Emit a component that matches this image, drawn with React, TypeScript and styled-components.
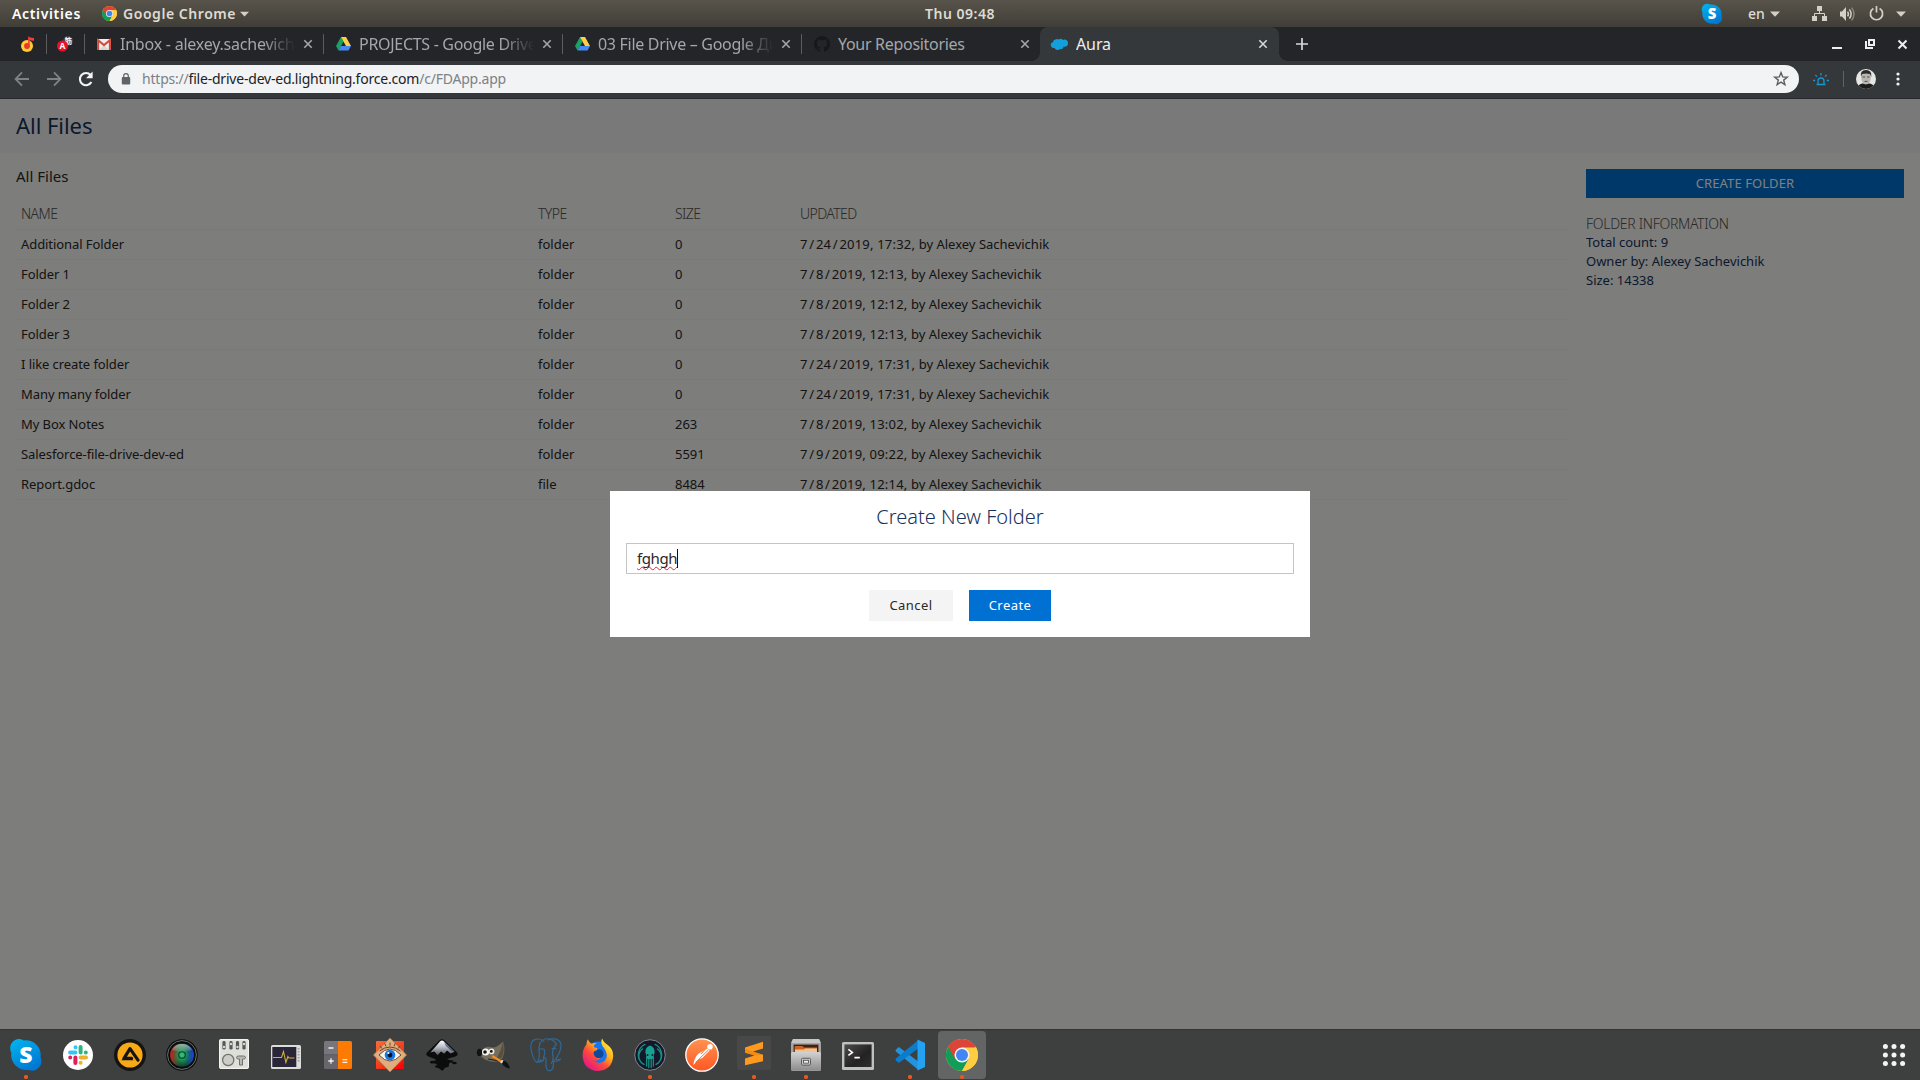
import React from 'react';
import styled, { createGlobalStyle } from 'styled-components';

const ui = `"Noto Sans", "Open Sans", sans-serif`;
const sf = `"Noto Sans", "Open Sans", sans-serif`;

const GlobalStyle = createGlobalStyle`
  * { box-sizing: border-box; }
  html, body { margin: 0; padding: 0; background: #242529; }
  svg { display: block; flex: none; overflow: visible; }
`;

const Desktop = styled.div`
  width: 1920px;
  height: 1080px;
  display: flex;
  flex-direction: column;
  overflow: hidden;
  font-family: ${ui};
`;

/* ---------- system bar ---------- */
const SystemBar = styled.header`
  height: 27px;
  flex: none;
  display: grid;
  grid-template-columns: 1fr auto 1fr;
  align-items: center;
  background: linear-gradient(#58544b, #403e38);
  color: #dfdbd2;
  font-size: 14px;
  font-weight: 600;
  line-height: 27px;
  white-space: nowrap;
`;
const BarSide = styled.div`
  display: flex;
  align-items: center;
  height: 27px;
`;
const BarLeft = styled(BarSide)`
  padding-left: 12px;
`;
const BarRight = styled(BarSide)`
  justify-content: flex-end;
  padding-right: 14px;
`;
const Activities = styled.span`
  color: #fff;
  width: 90px;
  letter-spacing: 0.65px;
`;
const AppName = styled.span`
  margin: 0 5px 0 6px;
  width: 112px;
  letter-spacing: 0.55px;
`;
const Clock = styled.span`
  letter-spacing: 0.5px;
`;
const Lang = styled.span`
  margin: 0 4px 0 25px;
  font-weight: 500;
  width: 18px;
`;
const Spacer = styled.span<{ $w: number }>`
  width: ${(p) => p.$w}px;
  flex: none;
`;

/* ---------- browser chrome ---------- */
const TabStrip = styled.nav`
  height: 34px;
  flex: none;
  display: flex;
  align-items: stretch;
  background: #242529;
`;
const PinnedTab = styled.div<{ $w: number; $pad: number }>`
  width: ${(p) => p.$w}px;
  padding-left: ${(p) => p.$pad}px;
  display: flex;
  align-items: center;
  background: linear-gradient(#5b5d60, #5b5d60) right 7px / 1px 20px no-repeat;
`;
const Tab = styled.div<{ $active?: boolean; $last?: boolean }>`
  width: 239px;
  flex: none;
  display: flex;
  align-items: center;
  position: relative;
  margin-left: ${(p) => (p.$active ? -1 : 0)}px;
  padding: 0 12px;
  color: ${(p) => (p.$active ? '#eceef0' : '#a3a7ab')};
  border-radius: 8px 8px 0 0;
  background: ${(p) =>
    p.$active
      ? '#35383b'
      : p.$last
        ? 'none'
        : 'linear-gradient(#5b5d60, #5b5d60) right 7px / 1px 20px no-repeat'};
`;
const TabCurve = styled.span<{ $side: 'left' | 'right' }>`
  position: absolute;
  bottom: 0;
  ${(p) => p.$side}: -8px;
  width: 8px;
  height: 8px;
  background: radial-gradient(
    circle at ${(p) => (p.$side === 'left' ? '0 0' : '100% 0')},
    #242529 7.5px,
    #35383b 8px
  );
`;
const TabTitle = styled.span<{ $fade?: boolean; $ls?: number }>`
  flex: 1;
  min-width: 0;
  margin: 0 9px 0 8px;
  overflow: hidden;
  white-space: nowrap;
  font-size: 16px;
  line-height: 33px;
  letter-spacing: ${(p) => p.$ls ?? -0.3}px;
  ${(p) => p.$fade && 'mask-image: linear-gradient(90deg, #000 82%, transparent 100%);'}
`;
const WindowControls = styled.div`
  margin-left: auto;
  padding-right: 13px;
  display: flex;
  align-items: center;
  gap: 23px;
`;
const NewTab = styled.div`
  display: flex;
  align-items: center;
  padding-left: 17px;
`;
const Toolbar = styled.div`
  height: 38px;
  flex: none;
  display: flex;
  align-items: center;
  padding: 0 16px 2px 14px;
  background: #35383b;
  border-bottom: 1px solid #28292c;
`;
const NavButtons = styled.div`
  display: flex;
  gap: 16px;
  width: 94px;
`;
const Omnibox = styled.div`
  flex: none;
  width: 1691px;
  height: 28px;
  border-radius: 14px;
  background: #f1f3f4;
  display: flex;
  align-items: center;
  padding: 0 10px 0 13px;
`;
const Url = styled.span`
  flex: 1;
  padding-left: 11px;
  font-size: 14px;
  line-height: 28px;
  letter-spacing: -0.21px;
  white-space: nowrap;
  color: #7d8186;
`;
const Host = styled.span`
  color: #202124;
`;
const Divider = styled.span`
  width: 1px;
  height: 16px;
  margin: 0 12px 0 14px;
  background: #606366;
`;
const Extensions = styled.div`
  flex: 1;
  display: flex;
  align-items: center;
  padding-left: 14px;
`;

/* ---------- page ---------- */
const Page = styled.div`
  flex: 1;
  min-height: 0;
  position: relative;
  background: #fafaf6;
  font-family: ${sf};
  display: flex;
  flex-direction: column;
`;
const PageHeader = styled.div`
  height: 54px;
  flex: none;
  padding-left: 16px;
  background: #f3f3f3;
  color: #16325c;
  font-size: 22px;
  line-height: 53px;
  letter-spacing: -0.05px;
`;
const Content = styled.main`
  display: flex;
  gap: 16px;
  padding: 0 16px;
`;
const Files = styled.section`
  width: 1554px;
`;
const Crumb = styled.h2`
  margin: 0;
  height: 47px;
  font-size: 15px;
  font-weight: 400;
  line-height: 46px;
  color: #2b2b2b;
`;
const Row = styled.div<{ $head?: boolean }>`
  display: grid;
  grid-template-columns: 517px 137px 125px 1fr;
  height: 30px;
  padding-left: 5px;
  border-bottom: 1px solid #f2f2ef;
  font-size: ${(p) => (p.$head ? 14 : 13)}px;
  font-weight: ${(p) => (p.$head ? 300 : 400)};
  line-height: ${(p) => (p.$head ? 28 : 29)}px;
  color: ${(p) => (p.$head ? '#54524f' : '#2b2826')};
  letter-spacing: ${(p) => (p.$head ? -0.6 : 0)}px;
  white-space: nowrap;
`;
const Name = styled.span`
  letter-spacing: -0.08px;
`;
const Stamp = styled.span`
  letter-spacing: 0.2px;
`;
const Slash = styled.span`
  margin: 0 1.6px;
`;
const Sidebar = styled.aside`
  flex: 1;
  padding-top: 16px;
`;
const CreateFolder = styled.button`
  width: 100%;
  height: 29px;
  display: block;
  border: 0;
  padding: 0 0 2px;
  background: #0070d2;
  color: #fff;
  font: 400 13px/26px ${sf};
  letter-spacing: 0.08px;
`;
const InfoTitle = styled.div`
  margin-top: 15px;
  height: 20px;
  font-size: 14px;
  font-weight: 300;
  line-height: 21px;
  letter-spacing: -0.3px;
  color: #54524f;
`;
const InfoLine = styled.div`
  height: 19px;
  font-size: 13px;
  line-height: 19px;
  color: #16325c;
`;
const Backdrop = styled.div`
  position: absolute;
  inset: 0;
  background: rgba(0, 0, 0, 0.5);
  display: flex;
  align-items: center;
  justify-content: center;
`;
const Modal = styled.div`
  width: 700px;
  height: 146px;
  padding: 0 16px;
  background: #fff;
  display: flex;
  flex-direction: column;
  align-items: center;
`;
const ModalTitle = styled.div`
  height: 52px;
  line-height: 51px;
  font-size: 20px;
  font-weight: 300;
  color: #16325c;
  white-space: nowrap;
`;
const Field = styled.div`
  align-self: stretch;
  height: 31px;
  border: 1px solid #c4c4c4;
  padding-left: 10px;
  display: flex;
  align-items: center;
  font-size: 15px;
  line-height: 29px;
  letter-spacing: -0.4px;
  color: #2b2826;
`;
const Typed = styled.span`
  text-decoration: underline wavy #e8253a 1px;
  text-decoration-skip-ink: none;
  text-underline-offset: 2px;
`;
const Caret = styled.span`
  width: 1px;
  height: 19px;
  background: #111;
`;
const Actions = styled.div`
  display: flex;
  gap: 16px;
  margin-top: 16px;
`;
const ActionButton = styled.button<{ $primary?: boolean }>`
  width: ${(p) => (p.$primary ? 82 : 84)}px;
  height: 31px;
  border: 0;
  padding: 0 0 2px;
  background: ${(p) => (p.$primary ? '#0070d2' : '#f4f4f4')};
  color: ${(p) => (p.$primary ? '#fff' : '#2b2826')};
  font: 400 13px/28px ${sf};
  letter-spacing: 0.45px;
`;

/* ---------- dock ---------- */
const Dock = styled.footer`
  height: 51px;
  flex: none;
  display: flex;
  align-items: stretch;
  background: #3e403f;
  border-top: 1px solid #333433;
`;
const DockItem = styled.div<{ $running?: boolean; $shift?: number }>`
  width: 52px;
  display: flex;
  align-items: center;
  justify-content: center;
  padding-top: ${(p) => Math.max(0, 2 * (p.$shift ?? 0))}px;
  padding-bottom: ${(p) => Math.max(0, -2 * (p.$shift ?? 0))}px;
  background: ${(p) =>
    p.$running ? 'radial-gradient(circle at 50% 47px, #e95420 1.8px, transparent 2.4px)' : 'none'};
`;
const FocusPlate = styled.div`
  width: 48px;
  height: 48px;
  flex: none;
  border-radius: 4px;
  display: flex;
  align-items: center;
  justify-content: center;
  background:
    radial-gradient(circle at 50% 46px, #e95420 1.8px, transparent 2.4px),
    #636564;
`;
const AppsButton = styled.div`
  margin-left: auto;
  width: 52px;
  display: flex;
  align-items: center;
  justify-content: center;
`;

/* ---------- glyphs ---------- */
const Down = ({ w = 10 }: { w?: number }) => (
  <svg width={w} height="6" viewBox="0 0 10 6"><path d="M0 .5h10L5 5.7z" fill="#d4d0c7" /></svg>
);

const Chrome = ({ s }: { s: number }) => (
  <svg width={s} height={s} viewBox="0 0 48 48">
    <circle cx="24" cy="24" r="24" fill="#ffcd42" />
    <path d="M24 24 3.2 12A24 24 0 0 0 24 48l10.4-18z" fill="#109d58" />
    <path d="M24 24 13.6 30 3.2 12a24 24 0 0 1 41.6 0z" fill="#db4437" />
    <path d="M24 12.8H45.2A24 24 0 0 1 24 48l9.8-18z" fill="#ffcd42" />
    <circle cx="24" cy="24" r="11.3" fill="#f4f4f4" />
    <circle cx="24" cy="24" r="9" fill="#4285f4" />
  </svg>
);

const Skype = ({ s }: { s: number }) => (
  <svg width={s} height={s} viewBox="0 0 34 34">
    <defs>
      <linearGradient id="sky" x1="0" y1="0" x2=".6" y2="1">
        <stop offset="0" stopColor="#00b7f0" /><stop offset="1" stopColor="#0078d4" />
      </linearGradient>
    </defs>
    <path
      d="M9.5 1c2 0 3.8.6 5.2 1.4A15 15 0 0 1 31.6 19.6 9.2 9.2 0 0 1 19.4 31.7 15 15 0 0 1 2.3 14.6 9.2 9.2 0 0 1 9.5 1z"
      fill="url(#sky)"
    />
    <text x="17" y="25" textAnchor="middle" fontFamily="Open Sans, sans-serif" fontWeight="800" fontSize="23" fill="#fff">S</text>
  </svg>
);

const TabClose = ({ c = '#a3a7ab' }: { c?: string }) => (
  <svg width="8" height="8" viewBox="0 0 8 8"><path d="M.3.3l7.4 7.4M7.7.3L.3 7.7" stroke={c} strokeWidth="1.6" /></svg>
);

const Gmail = () => (
  <svg width="15" height="11" viewBox="0 0 15 11">
    <rect width="14" height="11" rx="1" fill="#f1efec" />
    <path d="M2 11 7 6l5 5z" fill="#d9d6d2" />
    <path d="M1.1 11V1.2L7 6.1l5.9-4.9V11" fill="none" stroke="#d54b3d" strokeWidth="2.1" />
  </svg>
);
const Drive = () => (
  <svg width="15" height="14" viewBox="0 0 15 14">
    <path d="M5 0 0 9l2.5 4.6L7.6 4.6z" fill="#1aa260" />
    <path d="M5 0h5l5 9h-5z" fill="#ffcf48" />
    <path d="M4.9 9H15l-2.5 4.6h-10z" fill="#4688f4" />
  </svg>
);
const Github = () => (
  <svg width="16" height="16" viewBox="0 0 16 16">
    <path
      fill="#17181b"
      d="M8 0a8 8 0 0 0-2.53 15.59c.4.07.55-.17.55-.38v-1.34c-2.23.48-2.7-1.07-2.7-1.07-.36-.93-.89-1.17-.89-1.17-.72-.5.06-.49.06-.49.8.06 1.23.83 1.23.83.71 1.22 1.87.87 2.33.66.07-.52.28-.87.5-1.07-1.77-.2-3.64-.89-3.64-3.95 0-.87.31-1.59.82-2.15-.08-.2-.36-1.02.08-2.12 0 0 .67-.21 2.2.82a7.6 7.6 0 0 1 4 0c1.53-1.04 2.2-.82 2.2-.82.44 1.1.16 1.92.08 2.12.51.56.82 1.27.82 2.15 0 3.07-1.87 3.75-3.65 3.95.29.25.54.73.54 1.48v2.2c0 .21.15.46.55.38A8 8 0 0 0 8 0z"
    />
  </svg>
);
const Cloud = () => (
  <svg width="16" height="12" viewBox="0 0 16 12">
    <path d="M3.4 1.6A3.3 3.3 0 0 1 7 1.4 3 3 0 0 1 11 2a3.3 3.3 0 0 1 5 3 3.3 3.3 0 0 1-4.4 3.6A2.7 2.7 0 0 1 8 11a3.4 3.4 0 0 1-5.5-1.1A2.8 2.8 0 0 1 1 4.2a3 3 0 0 1 2.4-2.6z" fill="#139fdc" />
  </svg>
);
const Music = () => (
  <svg width="14" height="16" viewBox="0 0 14 16">
    <circle cx="6" cy="10" r="6" fill="#fc3" />
    <circle cx="6" cy="10" r="2.9" fill="#e8382d" />
    <path d="M7.1 10.2V.3c1.4.9 3.2 1.6 5.9 1.6v2.9c-1.8.1-3.2-.2-4.3-.8v6.2z" fill="#f5393c" />
  </svg>
);
const Translate = () => (
  <svg width="16" height="16" viewBox="0 0 16 16">
    <circle cx="11" cy="5" r="4.9" fill="#424346" />
    <text x="11.2" y="8" fontSize="7.5" textAnchor="middle" fill="#f5f5f5" fontWeight="700" fontFamily="Noto Sans CJK SC, sans-serif">筋</text>
    <circle cx="5.5" cy="10" r="5.5" fill="#ec1029" />
    <text x="5.5" y="13" fontSize="8.5" textAnchor="middle" fill="#fff" fontWeight="700" fontFamily="Open Sans, sans-serif">A</text>
  </svg>
);

const Grid9 = () => (
  <svg width="24" height="24" viewBox="-12 -12 24 24" fill="#f4f4f4">
    {[-8.6, 0, 8.6].map((y) => [-8.6, 0, 8.6].map((x) => <circle key={`${x}${y}`} cx={x} cy={y} r="2.5" />))}
  </svg>
);

const Slack = () => (
  <svg width="30" height="30" viewBox="-15 -15 30 30">
    <circle r="15" fill="#fff" />
    <g strokeWidth="4" strokeLinecap="round">
      <path d="M-2.5-7.8h0M-2.5-2.6h-5.4" stroke="#36c5f0" />
      <path d="M7.8-2.6h0M2.6-2.6v-5.4" stroke="#2eb67d" />
      <path d="M2.6 7.8h0M2.6 2.6h5.4" stroke="#ecb22e" />
      <path d="M-7.8 2.6h0M-2.6 2.6v5.4" stroke="#e01e5a" />
    </g>
  </svg>
);
const Aimp = () => (
  <svg width="32" height="32" viewBox="-16 -16 32 32">
    <circle r="16" fill="#141414" />
    <circle r="12.6" fill="#f9a916" />
    <path d="M8 5.200 0-6.400-6 3.300H1.600" fill="none" stroke="#151515" strokeWidth="3.200" strokeLinejoin="round" strokeLinecap="round" />
    <path d="m-8.600 5.200 3-3.600L1 3l2.600 2.200z" fill="#151515" />
  </svg>
);
const Lens = () => (
  <svg width="32" height="32" viewBox="-16 -16 32 32">
    <defs>
      <radialGradient id="lensG" cx=".5" cy=".5" r=".5">
        <stop offset="0" stopColor="#3cc47c" /><stop offset=".5" stopColor="#15884e" /><stop offset="1" stopColor="#0e3a2c" />
      </radialGradient>
      <linearGradient id="lensS">
        <stop offset="0" stopColor="#d81c1c" /><stop offset=".42" stopColor="#7c5c2c" stopOpacity="0" />
        <stop offset=".6" stopColor="#1c4c8c" stopOpacity="0" /><stop offset="1" stopColor="#1846e4" />
      </linearGradient>
      <linearGradient id="lensT" x1="0" y1="0" x2="0" y2="1">
        <stop offset="0" stopColor="#fff" stopOpacity=".6" /><stop offset="1" stopColor="#fff" stopOpacity=".05" />
      </linearGradient>
    </defs>
    <circle r="15.8" fill="#0b0c0c" />
    <circle r="14.4" fill="none" stroke="#777b7b" strokeWidth=".9" />
    <circle r="11.8" fill="url(#lensG)" />
    <circle r="11.8" fill="url(#lensS)" />
    <circle r="3.4" fill="none" stroke="#0a5232" strokeWidth="1.3" />
    <path d="M-10-5A11.4 11.4 0 0 1 10-5Q0-1-10-5z" fill="url(#lensT)" />
  </svg>
);
const Mixer = () => (
  <svg width="30" height="30" viewBox="0 0 30 30">
    <rect width="30" height="30" rx="2" fill="#dfdfda" />
    <rect x=".6" y=".6" width="28.8" height="28.8" rx="1.6" fill="none" stroke="#f6f6f3" />
    {[5, 12, 18.5, 25].map((x, i) => (
      <g key={x}>
        <rect x={x - 1.6} y="2" width="3.2" height="8.6" rx="1.4" fill="#55585a" />
        <circle cx={x} cy={i % 2 ? 5 : 8} r="1.2" fill="#d8d8d4" />
      </g>
    ))}
    <circle cx="9.2" cy="21" r="5.6" fill="#cdcdc8" stroke="#6d6f6e" strokeWidth="1.2" />
    <path d="M17.5 18.5q0-1.5 2-1.5h5q2 0 2 1.5t-2 1.5h-1v6h-3v-6h-1q-2 0-2-1.5z" fill="#babab5" stroke="#6d6f6e" />
  </svg>
);
const Monitor = () => (
  <svg width="30" height="24" viewBox="0 0 30 24">
    <rect width="30" height="24" rx="1.6" fill="#dcdcda" />
    <rect x="1.3" y="2" width="24" height="20" fill="#2a2639" />
    <path d="M2 12.5h8.5l2-6 2.4 11 2-6 1 1.5h5.5" stroke="#d0b03c" strokeWidth="1.1" fill="none" />
    <path d="M27.6 3v14" stroke="#9c9c9a" strokeWidth="1.8" strokeDasharray="1.6 1.4" />
  </svg>
);
const Calc = () => (
  <svg width="28" height="28" viewBox="0 0 28 28">
    <path d="M0 1.5Q0 0 1.5 0H14v14H0z" fill="#76767c" />
    <path d="M0 14h14v14H1.5Q0 28 0 26.5z" fill="#66666c" />
    <path d="M14 0h12.5Q28 0 28 1.5v25q0 1.5-1.5 1.5H14z" fill="#ff7a00" />
    <path d="M0 13.700h14" stroke="#54545a" strokeWidth=".8" />
    <path d="M4.500 7h5M4.300 20h5.400M7 17.300v5.400M18.400 18.600h5M18.400 21.400h5" stroke="#f5f0ea" strokeWidth="1.300" />
  </svg>
);
const Eye = () => (
  <svg width="34" height="34" viewBox="-17 -17 34 34">
    <defs>
      <linearGradient id="eyeR" x1="0" y1="0" x2=".8" y2="1">
        <stop offset="0" stopColor="#f96c3c" /><stop offset=".6" stopColor="#f63c1c" /><stop offset="1" stopColor="#f40808" />
      </linearGradient>
    </defs>
    <rect x="-14" y="-14" width="28" height="28" rx="1" fill="url(#eyeR)" />
    <path d="M0-17 16.6 0 0 17-16.6 0z" fill="#e0ae7c" stroke="#a8764c" strokeWidth=".8" />
    <path d="M-11 0Q0-12 11 0 0 12-11 0z" fill="#f7f4f0" stroke="#5d3a20" strokeWidth=".9" />
    <path d="M-10.5-4Q0-12 10.5-4M-8-6.4l-2-2.6M-4-8.7l-1.2-2.8M0-9.4v-3M4-8.7l1.2-2.8M8-6.4l2-2.6" stroke="#6a4325" strokeWidth="1" fill="none" />
    <circle r="5.3" fill="#1877e4" /><circle r="2.4" fill="#06122c" /><circle cx="-1.6" cy="-2" r="1.1" fill="#fff" />
  </svg>
);
const Inkscape = () => (
  <svg width="32" height="32" viewBox="-16 -16 32 32">
    <defs>
      <linearGradient id="inkG" x1="0" y1="0" x2="0" y2="1">
        <stop offset="0" stopColor="#fff" /><stop offset=".45" stopColor="#b8bcc4" /><stop offset="1" stopColor="#505256" />
      </linearGradient>
    </defs>
    <path d="M-2.6-14.6Q0-17 2.6-14.6L14.6-3Q17.4 0 13.4 1.4L5 4q2 1.6 6 1.4 1.2 1.6-2 2.2-3 .8-2 2.6.6 1.4-2 2-3 .2-3 2.2-1.6 2-3.6.2-1-2-4.4-2.2-2.6-1 .8-2.2.6-1.2-2.4-1.6-5-.2-4.4-2 1.2-1 5.4-.8 1-1.6-1-2l-6-2.4Q-17.4 0-14.6-3z" fill="#0c0c0d" />
    <path d="M-2-13.6Q0-15.4 2-13.6L12.6-3.2 8.6-1.6 5-4.4 2.2-1.2-1-3.6-4.4.2-7.6-3.6l-4 1z" fill="url(#inkG)" />
    <path d="M2-13 12.4-3 9-4.6 4-9z" fill="#2c3c64" opacity=".75" />
    <ellipse cx="12.4" cy="8" rx="2.4" ry="1.3" fill="#0c0c0d" /><ellipse cx="-10.4" cy="7.4" rx="1.4" ry="1" fill="#0c0c0d" />
  </svg>
);
const Gimp = () => (
  <svg width="34" height="30" viewBox="0 0 34 30">
    <path d="M1 11q2-2 5-.5Q8 6 13 7q6 2 13-5.6Q29 10 25.5 18 20 23.6 12 21 4 19 1 11z" fill="#756d5c" />
    <path d="M25.8 2Q28 10 25 17.5l-7 3Q24 12 25.8 2z" fill="#57503f" />
    <ellipse cx="2.6" cy="12.4" rx="2.7" ry="3.6" fill="#121212" />
    <circle cx="8.6" cy="12" r="3.6" fill="#f3f3f1" /><circle cx="14.6" cy="11.400" r="2.800" fill="#ebebe8" />
    <circle cx="8" cy="12" r="1.8" fill="#121212" /><circle cx="14.3" cy="11.400" r="1.4" fill="#121212" />
    <path d="M11 19q8 2 13 1" stroke="#24211b" strokeWidth="1.2" fill="none" />
    <path d="m16 16.500 9 5.600" stroke="#ef8b26" strokeWidth="2.400" strokeLinecap="round" />
    <path d="m24 21 2.600 1.700" stroke="#d9d9d9" strokeWidth="3.200" />
    <path d="M26.400 20.600q5 1.600 6.600 8-5-.6-8-4.800z" fill="#111" />
  </svg>
);
const Postgres = () => (
  <svg width="32" height="34" viewBox="0 0 32 34" fill="none" stroke="#2f6896" strokeWidth="1.2" strokeLinecap="round" strokeLinejoin="round">
    <path d="M14 3.4Q10-.2 4.6 1.6 0 3.4 1 11q1.6 9.600 5.400 13 2.400 1 4.600-2.400" />
    <path d="M10 5q3-4.600 8-4.200 5 .2 8.400 5Q22 12 22.600 16q1.600 4.600-1.200 9.400" />
    <path d="M18 2q4-1.800 8-.8 5.400 1.600 5 7-1 7.400-5.400 13 2.600 1.200 5-.2-2.400 3-8.200 2.400" />
    <path d="M10 5Q8.400 10 9.200 15q.6 4-1.200 7 2 2.600 5.400.6l.6-3.400 2 1.400v7q.4 5.400 4 5 3.600-.4 3.400-7l.6-4" />
    <path d="M9.400 11.400q3-1.400 5 .2.8 4-1 8M22 10.600h4" /><path d="M13 22.600q-3 2-6 1.400" />
  </svg>
);
const Firefox = () => (
  <svg width="32" height="34" viewBox="-16 -17 32 34">
    <defs>
      <linearGradient id="ffO" x1=".9" y1=".1" x2=".2" y2=".95">
        <stop offset="0" stopColor="#fff044" /><stop offset=".35" stopColor="#ffae1c" /><stop offset=".62" stopColor="#ff4b38" /><stop offset="1" stopColor="#e4148c" />
      </linearGradient>
    </defs>
    <circle cx="0" cy="-1" r="12.5" fill="#1577f0" />
    <path d="M4-16.4q1.4 3.4 4.4 5.4Q15.4-6.6 15.2.8 14.4 15 0 16-14.4 15.400-15.400 1-15.400-6-11.600-10.400q.2-3.400 1.400-5.400 1.200 3 3.600 4.600Q-4-12.200-1.400-12-4.600-10-4-8q.6 1 3.400 1-.2 2.600-3.800 3.800Q-5-1-3 1.600-.4 4 3.400 2.600-2 8-6 4.600 1 11 7 5.600 11-.2 6-7 1.800-11.400 4-16.400z" fill="url(#ffO)" />
    <path d="M-3 1.500Q0 4 3.400 2.600 6.600.8 5-3.500 3-6.500 0-5.600-1-4-4-3.400-5-1-3 1.500z" fill="#10489c" />
  </svg>
);
const Kraken = () => (
  <svg width="32" height="32" viewBox="-16 -16 32 32">
    <circle r="15.300" fill="#15172a" stroke="#85868a" strokeWidth="1" />
    <g fill="none" stroke="#168f81" strokeWidth="1.300" strokeLinecap="round">
      <path d="M-5-10.600A11.600 11.600 0 0 0-9 7.400M5-10.600A11.600 11.600 0 0 1 9 7.400M-7.400-6A9 9 0 0 0-6 9.400M7.400-6A9 9 0 0 1 6 9.400M-3.400 2v9M-1.200 3v9.600M1.200 3v9.600M3.400 2v9" />
    </g>
    <path d="M0-9.400Q4.800-8 4.600-2.600 3.800.4 2.600 4H-2.600Q-3.800.4-4.600-2.600-4.800-8 0-9.400z" fill="#18a090" />
    <circle cx="-2.400" cy="0" r=".9" fill="#15172a" /><circle cx="2.400" cy="0" r=".9" fill="#15172a" />
  </svg>
);
const Postman = () => (
  <svg width="34" height="34" viewBox="-17 -17 34 34">
    <defs><linearGradient id="pmG" x1="0" y1="0" x2="0" y2="1"><stop offset="0" stopColor="#ff9350" /><stop offset="1" stopColor="#ff5722" /></linearGradient></defs>
    <circle r="16.200" fill="url(#pmG)" stroke="#fff" strokeWidth="1.300" />
    <circle cx="8" cy="-8.200" r="2.800" fill="#fff" />
    <path d="M5.400-6.400 7.600-4.400.4 3-3.600 4.600-8.800 10.200Q-7.400-.6 0-3.400z" fill="#fff" />
    <path d="m6.400-5-13 12.600M3-5.500-1-1" stroke="#ff7038" strokeWidth="1" />
  </svg>
);
const Sublime = () => (
  <svg width="34" height="34" viewBox="0 0 34 34">
    <rect width="34" height="34" rx="2" fill="#484848" />
    <path d="m8 11.600 18-5.800v6.600l-10 3.200 10 3.200v6.400L8 29.200v-6.600l9.400-3L8 16.800z" fill="#ff9a1f" />
    <path d="m16 15.600 10 3.200-8.600.8L8 16.800v-4z" fill="#e27d00" opacity=".5" />
  </svg>
);
const Drawer = () => (
  <svg width="30" height="34" viewBox="0 0 30 34">
    <defs><linearGradient id="drG" x1="0" y1="0" x2="0" y2="1"><stop offset="0" stopColor="#d2d2d2" /><stop offset="1" stopColor="#8c8c8c" /></linearGradient></defs>
    <path d="M2 1h26l2 5v25.500Q30 33 28 33H2Q0 33 0 31.500V6z" fill="#a4a4a4" />
    <path d="M2 1h26l2 4H0z" fill="#c6c6c6" />
    <rect x="2.600" y="6.600" width="24.800" height="8" fill="#40210f" />
    <path d="M3.600 9q0-1 1-1h7l1.400 1.400h13v5.200H3.600z" fill="#c86428" />
    <path d="M4 11.600h9l1-1h12v4H4z" fill="#f0c490" />
    <rect x="0" y="14" width="30" height="18.600" rx="1.500" fill="url(#drG)" />
    <rect x="10.500" y="20.300" width="9" height="6.800" rx="1" fill="#c8c8c8" stroke="#5c5c5c" strokeWidth="1" />
    <rect x="12.500" y="22.300" width="5" height="2.800" fill="#f4f4f4" stroke="#444" strokeWidth=".8" />
  </svg>
);
const Terminal = () => (
  <svg width="32" height="28" viewBox="0 0 32 28">
    <defs><linearGradient id="tmG" x1="0" y1="0" x2="1" y2="1"><stop offset="0" stopColor="#4c4c4c" /><stop offset=".6" stopColor="#222" /><stop offset="1" stopColor="#303030" /></linearGradient></defs>
    <rect width="32" height="28" rx="1.500" fill="#bfc1be" />
    <rect x="2.400" y="2.400" width="27.200" height="22.600" fill="url(#tmG)" />
    <path d="m6.400 7.400 4 3-4 3M12.400 15.600h5.400" stroke="#fff" strokeWidth="1.600" fill="none" />
  </svg>
);
const VsCode = () => (
  <svg width="31" height="32" viewBox="0 0 31 32">
    <path d="M1 10.400 3.800 8 23.500 22.800V31L.9 12.400q-.8-1 .1-2z" fill="#1f9cf0" opacity=".9" />
    <path d="M1 21.600 3.800 24 23.500 9.200V1L.9 19.600q-.8 1 .1 2z" fill="#0a7ccb" />
    <path d="M22.500.6 30 4v24l-7.500 3.400z" fill="#23a2f2" />
  </svg>
);

const dock: { icon: React.ReactNode; running?: boolean; focused?: boolean; shift?: number }[] = [
  { icon: <Skype s={34} />, running: true },
  { icon: <Slack /> },
  { icon: <Aimp /> },
  { icon: <Lens /> },
  { icon: <Mixer />, shift: -1.5 },
  { icon: <Monitor />, shift: 2 },
  { icon: <Calc /> },
  { icon: <Eye /> },
  { icon: <Inkscape /> },
  { icon: <Gimp /> },
  { icon: <Postgres /> },
  { icon: <Firefox /> },
  { icon: <Kraken />, running: true },
  { icon: <Postman /> },
  { icon: <Sublime />, running: true, shift: -2 },
  { icon: <Drawer />, running: true },
  { icon: <Terminal />, shift: 1 },
  { icon: <VsCode />, running: true },
  { icon: <Chrome s={32} />, focused: true },
];

const files: string[][] = [
  ['Additional Folder', 'folder', '0', '7/24/2019, 17:32'],
  ['Folder 1', 'folder', '0', '7/8/2019, 12:13'],
  ['Folder 2', 'folder', '0', '7/8/2019, 12:12'],
  ['Folder 3', 'folder', '0', '7/8/2019, 12:13'],
  ['I like create folder', 'folder', '0', '7/24/2019, 17:31'],
  ['Many many folder', 'folder', '0', '7/24/2019, 17:31'],
  ['My Box Notes', 'folder', '263', '7/8/2019, 13:02'],
  ['Salesforce-file-drive-dev-ed', 'folder', '5591', '7/9/2019, 09:22'],
  ['Report.gdoc', 'file', '8484', '7/8/2019, 12:14'],
];

const Updated = ({ at }: { at: string }) => {
  const [month, day, rest] = at.split('/');
  return (
    <span>
      <Stamp>{month}<Slash>/</Slash>{day}<Slash>/</Slash>{rest}, </Stamp>
      by Alexey Sachevichik
    </span>
  );
};

const TopBar = () => (
  <SystemBar>
    <BarLeft>
      <Activities>Activities</Activities>
      <Chrome s={15} />
      <AppName>Google Chrome</AppName>
      <Down w={9} />
    </BarLeft>
    <Clock>Thu 09:48</Clock>
    <BarRight>
      <Skype s={22} />
      <Lang>en</Lang>
      <Down />
      <Spacer $w={32} />
      <svg width="15" height="15" viewBox="0 0 15 15">
        <path d="M5 0h5v5H5zM0 10h5v5H0zM10 10h5v5h-5z" fill="#d4d0c7" />
        <path d="M7.500 5v2.500M2.500 10V7.500h10V10" stroke="#d4d0c7" fill="none" />
      </svg>
      <Spacer $w={13} />
      <svg width="15" height="14" viewBox="0 0 15 14">
        <path d="M0 4.500h2L6 0v14L2 9.500H0z" fill="#d4d0c7" />
        <path d="M7.600 4.600q1.600 2.400 0 4.800M9.400 2.400q3.400 4.600 0 9.200" stroke="#d4d0c7" strokeWidth="1.500" fill="none" />
        <path d="M11.600.6q4.800 6.400 0 12.800" stroke="#87847c" strokeWidth="1.500" fill="none" />
      </svg>
      <Spacer $w={14} />
      <svg width="15" height="15" viewBox="0 0 15 15">
        <path d="M4.400 2.400a6.100 6.100 0 1 0 6.200 0M7.500 0v6.600" stroke="#d4d0c7" strokeWidth="1.700" fill="none" />
      </svg>
      <Spacer $w={12} />
      <Down />
    </BarRight>
  </SystemBar>
);

const Browser = () => (
  <>
    <TabStrip>
      <PinnedTab $w={47} $pad={21}><Music /></PinnedTab>
      <PinnedTab $w={38} $pad={10}><Translate /></PinnedTab>
      <Tab>
        <Gmail />
        <TabTitle $fade $ls={-0.22}>Inbox - alexey.sachevichik</TabTitle>
        <TabClose />
      </Tab>
      <Tab>
        <Drive />
        <TabTitle $fade>PROJECTS - Google Drive</TabTitle>
        <TabClose />
      </Tab>
      <Tab>
        <Drive />
        <TabTitle $fade>03 File Drive – Google Диск</TabTitle>
        <TabClose />
      </Tab>
      <Tab $last>
        <Github />
        <TabTitle>Your Repositories</TabTitle>
        <TabClose />
      </Tab>
      <Tab $active>
        <TabCurve $side="left" />
        <Cloud />
        <TabTitle $ls={-0.1}>Aura</TabTitle>
        <TabClose c="#d5d7d9" />
        <TabCurve $side="right" />
      </Tab>
      <NewTab>
        <svg width="12" height="12" viewBox="0 0 12 12"><path d="M6 0v12M0 6h12" stroke="#d5d7d9" strokeWidth="1.700" /></svg>
      </NewTab>
      <WindowControls>
        <svg width="10" height="10" viewBox="0 0 10 10"><path d="M0 9h10" stroke="#eee" strokeWidth="2" /></svg>
        <svg width="10" height="10" viewBox="0 0 10 10">
          <path d="M4 1h5v5H4zM1 2v7h7" fill="none" stroke="#eee" strokeWidth="2" />
        </svg>
        <svg width="9" height="9" viewBox="0 0 9 9"><path d="m.5.5 8 8M8.500.5l-8 8" stroke="#eee" strokeWidth="2" /></svg>
      </WindowControls>
    </TabStrip>
    <Toolbar>
      <NavButtons>
        <svg width="16" height="16" viewBox="0 0 16 16"><path d="M15 8H2M8 1.400 1.600 8 8 14.600" stroke="#7f8285" strokeWidth="1.800" fill="none" /></svg>
        <svg width="16" height="16" viewBox="0 0 16 16"><path d="M1 8h13M8 1.400 14.400 8 8 14.600" stroke="#7f8285" strokeWidth="1.800" fill="none" /></svg>
        <svg width="16" height="16" viewBox="0 0 16 16">
          <path d="M13.400 11A6.100 6.100 0 1 1 12.600 4" stroke="#f4f4f4" strokeWidth="2.100" fill="none" />
          <path d="M14.600.6v6.600H8z" fill="#f4f4f4" />
        </svg>
      </NavButtons>
      <Omnibox>
        <svg width="10" height="12" viewBox="0 0 10 12">
          <rect x=".8" y="4" width="8.400" height="7.600" rx="1" fill="#5f6368" />
          <path d="M2.700 4.500V3a2.300 2.300 0 0 1 4.600 0v1.500" fill="none" stroke="#5f6368" strokeWidth="1.200" />
        </svg>
        <Url>https://<Host>file-drive-dev-ed.lightning.force.com</Host>/c/FDApp.app</Url>
        <svg width="16" height="16" viewBox="0 0 16 16">
          <path d="m8 1.600 1.700 4.300 4.600.3-3.600 2.900 1.200 4.500L8 11.100l-3.900 2.500 1.200-4.500L1.700 6.200l4.600-.3z" fill="none" stroke="#5a5e63" strokeWidth="1.400" />
        </svg>
      </Omnibox>
      <Extensions>
        <svg width="16" height="14" viewBox="0 0 16 14" fill="none" stroke="#1797d2" strokeWidth="1.300">
          <path d="M3.500 12.500h9M5 12.400V9a3 3 0 0 1 6 0v3.400M0 8.500h2.200M13.800 8.500H16M8 1v2.400M2.400 3 4 4.600M13.600 3 12 4.600" />
        </svg>
        <Divider />
        <svg width="20" height="20" viewBox="0 0 20 20">
          <defs><clipPath id="ava"><circle cx="10" cy="10" r="10" /></clipPath></defs>
          <g clipPath="url(#ava)">
            <rect width="20" height="20" fill="#e6e6e4" />
            <path d="M0 20q1-4 6-5.500h8q5 1.500 6 5.500v1H0z" fill="#1c1c1c" />
            <ellipse cx="10" cy="8.800" rx="4.800" ry="6.800" fill="#b9b5b1" />
            <path d="M5 8Q3.800 1 10 1t5.200 7l-1.200-3Q10 3.800 6 5z" fill="#2b2a29" />
            <path d="M6.500 8h2.600M11 8h2.600M8.600 12.400h3" stroke="#474441" strokeWidth=".9" />
          </g>
        </svg>
        <Spacer $w={20} />
        <svg width="4" height="14" viewBox="0 0 4 14" fill="#f2f2f2"><circle cx="2" cy="2" r="1.600" /><circle cx="2" cy="7" r="1.600" /><circle cx="2" cy="12" r="1.600" /></svg>
      </Extensions>
    </Toolbar>
  </>
);

export default function App() {
  return (
    <Desktop>
      <GlobalStyle />
      <TopBar />
      <Browser />
      <Page>
        <PageHeader>All Files</PageHeader>
        <Content>
          <Files>
            <Crumb>All Files</Crumb>
            <Row $head><span>NAME</span><span>TYPE</span><span>SIZE</span><span>UPDATED</span></Row>
            {files.map(([name, type, size, at]) => (
              <Row key={name}>
                <Name>{name}</Name>
                <span>{type}</span>
                <span>{size}</span>
                <Updated at={at} />
              </Row>
            ))}
          </Files>
          <Sidebar>
            <CreateFolder>CREATE FOLDER</CreateFolder>
            <InfoTitle>FOLDER INFORMATION</InfoTitle>
            <InfoLine>Total count: 9</InfoLine>
            <InfoLine>Owner by: Alexey Sachevichik</InfoLine>
            <InfoLine>Size: 14338</InfoLine>
          </Sidebar>
        </Content>
        <Backdrop>
          <Modal>
            <ModalTitle>Create New Folder</ModalTitle>
            <Field><Typed>fghgh</Typed><Caret /></Field>
            <Actions>
              <ActionButton>Cancel</ActionButton>
              <ActionButton $primary>Create</ActionButton>
            </Actions>
          </Modal>
        </Backdrop>
      </Page>
      <Dock>
        {dock.map((d, i) => (
          <DockItem key={i} $running={d.running} $shift={d.shift}>
            {d.focused ? <FocusPlate>{d.icon}</FocusPlate> : d.icon}
          </DockItem>
        ))}
        <AppsButton><Grid9 /></AppsButton>
      </Dock>
    </Desktop>
  );
}
